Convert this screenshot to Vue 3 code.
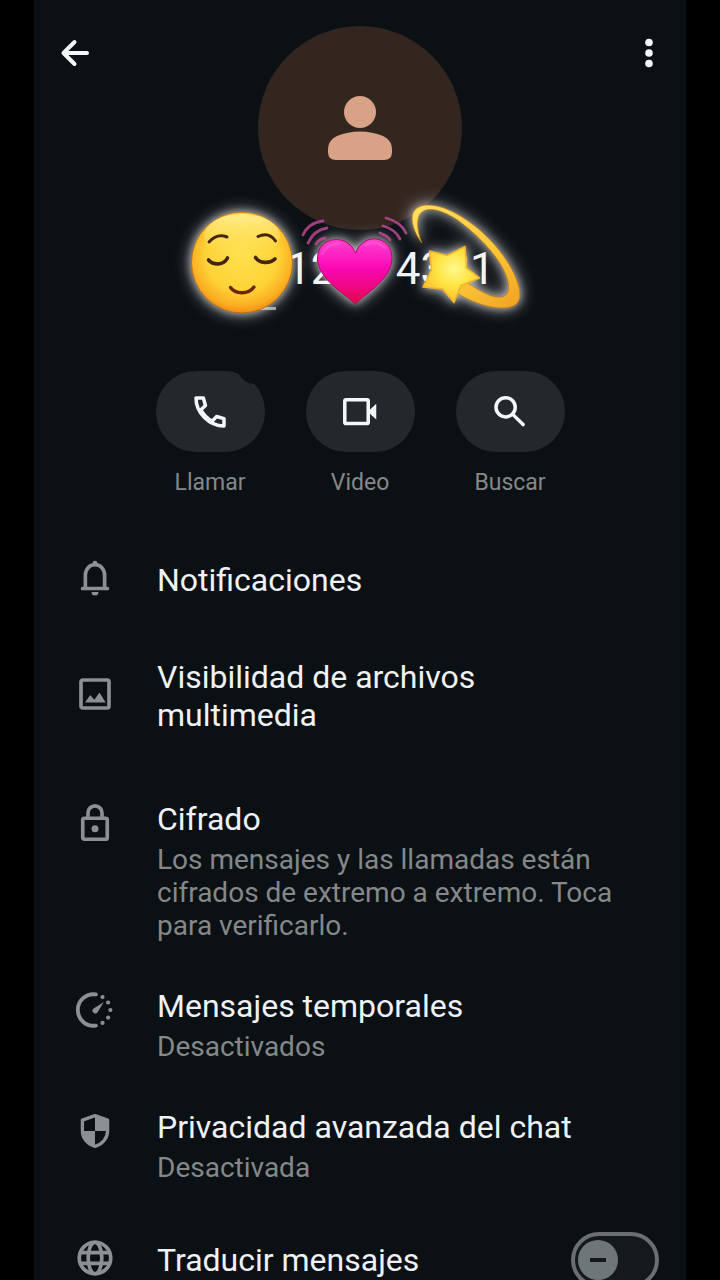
<script setup>
import { ref } from 'vue'

const translate = ref(false)

const actions = [
  { id: 'call', label: 'Llamar' },
  { id: 'video', label: 'Video' },
  { id: 'search', label: 'Buscar' }
]

const settings = [
  { id: 'bell', title: 'Notificaciones' },
  { id: 'media', title: 'Visibilidad de archivos multimedia' },
  {
    id: 'lock',
    title: 'Cifrado',
    detail: 'Los mensajes y las llamadas están cifrados de extremo a extremo. Toca para verificarlo.'
  },
  { id: 'timer', title: 'Mensajes temporales', detail: 'Desactivados' },
  { id: 'shield', title: 'Privacidad avanzada del chat', detail: 'Desactivada' }
]
</script>

<template>
  <div class="screen">
    <main class="panel">
      <header class="top">
        <button class="icon-button" type="button" aria-label="Atrás">
          <svg width="42" height="42" viewBox="0 0 42 42" fill="none" stroke="#f5f8fa" stroke-width="4" stroke-linecap="round" stroke-linejoin="round">
            <path d="M33 21H9.500M20.500 10L9.500 21l11 11" />
          </svg>
        </button>
        <div class="avatar">
          <svg width="64" height="64" viewBox="0 0 64 64" fill="#d9a186">
            <circle cx="32" cy="16" r="16" />
            <path d="M0 54C0 47 3 43 9 40c14-6 32-6 46 0 6 3 9 7 9 14v2q0 8-8 8H8q-8 0-8-8z" />
          </svg>
        </div>
        <button class="icon-button" type="button" aria-label="Más opciones">
          <svg width="42" height="42" viewBox="0 0 42 42" fill="#f5f8fa">
            <circle cx="25" cy="10.500" r="3.800" />
            <circle cx="25" cy="21" r="3.800" />
            <circle cx="25" cy="31.500" r="3.800" />
          </svg>
        </button>
        <svg class="stickers" width="360" height="140" viewBox="180 190 360 140" aria-hidden="true">
          <defs>
            <radialGradient id="face" cx="0.5" cy="0.42" r="0.6">
              <stop offset="0" stop-color="#ffe04e" />
              <stop offset="0.6" stop-color="#fed337" />
              <stop offset="0.85" stop-color="#fbae22" />
              <stop offset="1" stop-color="#ea8512" />
            </radialGradient>
            <linearGradient id="shine" x1="0" y1="0" x2="0" y2="1">
              <stop offset="0" stop-color="#fff3a0" stop-opacity="0.85" />
              <stop offset="1" stop-color="#ffe356" stop-opacity="0" />
            </linearGradient>
            <linearGradient id="heart" x1="0" y1="0" x2="0" y2="1">
              <stop offset="0" stop-color="#ff42d0" />
              <stop offset="0.45" stop-color="#fb08b5" />
              <stop offset="0.75" stop-color="#ee0782" />
              <stop offset="1" stop-color="#dd0944" />
            </linearGradient>
            <linearGradient id="orbit" x1="0" y1="0" x2="1" y2="1">
              <stop offset="0" stop-color="#ffe064" />
              <stop offset="0.6" stop-color="#fbc73a" />
              <stop offset="1" stop-color="#f0a122" />
            </linearGradient>
            <radialGradient id="star" cx="0.55" cy="0.4" r="0.65">
              <stop offset="0" stop-color="#fff98f" />
              <stop offset="0.45" stop-color="#ffe646" />
              <stop offset="1" stop-color="#fbb92b" />
            </radialGradient>
          </defs>
          <path d="M258 307h18v3h-18z" fill="#929494" />
          <g class="glow">
            <circle cx="242" cy="262.500" r="50.500" fill="url(#face)" stroke="#a95f15" stroke-width="0.700" />
            <ellipse cx="242" cy="236" rx="38" ry="22" fill="url(#shine)" />
            <g fill="none" stroke="#47240d" stroke-linecap="round">
              <path d="M209 242q8-9 18-5M258 236.500q11-5 17.500 4.500" stroke-width="3" />
              <path d="M208.500 260c5 5.500 15 5.500 19-2M255.500 257.500c4 6 14 6.500 19.500 1.500" stroke-width="3.600" />
              <path d="M230.500 287.500c5 7 18 7 23.500-.5" stroke="#6f220e" stroke-width="3.400" />
            </g>
          </g>
          <g class="glow">
            <path d="M355.500 304C346 295 317.500 279 317.500 258C317.500 237 347 232 355.500 253C364 231 392 236 392 258C392 279 365 294 355.500 304z" fill="url(#heart)" stroke="#ae0a62" stroke-width="1" />
            <path d="M322 254q5-11 17-10M366 245q10-6 19 3" fill="none" stroke="#ff82df" stroke-width="3" stroke-linecap="round" opacity="0.250" />
          </g>
          <g fill="none" stroke="#c5489a" stroke-width="2.800" stroke-linecap="round" opacity="0.800">
            <path d="M303 235q5-12 20-14M308 243q6-13 19-15M316 244q3-5 9-6M386 218q15 4 20 15M383 226q12 3 17 13M380 233q8 3 10 7" />
          </g>
          <g class="glow">
            <path d="M421.700 242.700C414 233 410 220 413 213C417 203 433 203 449 210C480 224 511 257 519 287C522 300 518 307 505 308C488 309 465 300 450 288L462 279C478 290 488 296 497 297C507 298 510 292 508 282C504 263 484 241 464 225C448 212 429 205 421 213C416 218 417 231 421.700 242.700z" fill="url(#orbit)" stroke="#bd761b" stroke-width="0.800" />
            <path d="M465 246.500L466.500 268L479.500 278L461 285.500L454 302.500L442.500 289L423 287L431.500 270L429.500 251L447 255.500z" fill="url(#star)" stroke="#f5b52b" stroke-width="1.600" stroke-linejoin="round" />
          </g>
        </svg>
      </header>

      <h1 class="number">+5 1233 4321</h1>

      <nav class="actions">
        <div v-for="action in actions" :key="action.id" class="action">
          <button :id="action.id" class="pill" type="button" :aria-labelledby="action.id + '-label'">
            <svg v-if="action.id === 'call'" width="42" height="42" viewBox="0 0 24 24" fill="none" stroke="#f5f8fa" stroke-width="2" stroke-linejoin="round">
              <path d="M4 4h4.200l1.200 4.300-2.600 2.400c1.500 2.900 3.600 5 6.500 6.500l2.500-2.600L20 15.800V20C11.500 20 4 12.500 4 4z" />
            </svg>
            <svg v-else-if="action.id === 'video'" width="42" height="42" viewBox="0 0 24 24">
              <rect x="3.300" y="5" width="13.400" height="13.600" rx="0.800" fill="none" stroke="#f5f8fa" stroke-width="2" />
              <path d="M16.700 11.500l4.600-4.200v9l-4.600-4.200z" fill="#f5f8fa" />
            </svg>
            <svg v-else width="42" height="42" viewBox="0 0 24 24" fill="none" stroke="#f5f8fa" stroke-width="2" stroke-linecap="round">
              <circle cx="9.500" cy="9.300" r="5.500" />
              <path d="M13.700 13.500l5.800 5.700" />
            </svg>
            <svg v-if="action.id === 'call'" class="notch" width="34" height="16" viewBox="0 0 34 16">
              <path d="M2 0q5 1 8 6 5 7 14 7 3 0 5 3h5V0z" fill="#0b1014" />
            </svg>
          </button>
          <label :id="action.id + '-label'" :for="action.id" class="action-label">{{ action.label }}</label>
        </div>
      </nav>

      <ul class="settings">
        <li v-for="item in settings" :key="item.id" class="row" :class="[item.id, { detailed: item.detail }]">
          <svg v-if="item.id === 'bell'" class="icon" viewBox="0 0 24 24">
            <path d="M6.500 18v-7.500C6.500 7 8.800 4.400 12 4.400s5.500 2.600 5.500 6.100V18M4.900 18h14.200" fill="none" stroke="currentColor" stroke-width="2.100" stroke-linecap="round" />
            <path d="M10.600 4.800V3.500a1.400 1.400 0 0 1 2.800 0v1.300zM10 20h4a2 2 0 0 1-4 0z" fill="currentColor" />
          </svg>
          <svg v-else-if="item.id === 'media'" class="icon" viewBox="0 0 24 24">
            <rect x="4" y="4" width="16" height="16" rx="1" fill="none" stroke="currentColor" stroke-width="2.100" />
            <path d="M6.300 16.900l3-4.300 2.300 2.700 3-4.200 3.500 5.800z" fill="currentColor" />
          </svg>
          <svg v-else-if="item.id === 'lock'" class="icon" viewBox="0 0 24 24">
            <rect x="5" y="9.300" width="14" height="12" rx="0.900" fill="none" stroke="currentColor" stroke-width="2.100" />
            <path d="M8 9V6.200a4 4 0 0 1 8 0V9" fill="none" stroke="currentColor" stroke-width="2.100" />
            <circle cx="12" cy="15.300" r="2" fill="currentColor" />
          </svg>
          <svg v-else-if="item.id === 'timer'" class="icon" viewBox="0 0 24 24">
            <path d="M12.500 3.100a9 9 0 1 0 0 17.800" fill="none" stroke="currentColor" stroke-width="2.200" stroke-linecap="round" />
            <path d="M11 11.300l6-3.900-3.600 6a1.500 1.500 0 1 1-2.400-2.100z" fill="currentColor" />
            <g fill="currentColor">
              <circle cx="16.300" cy="4.600" r="1.200" />
              <circle cx="19.500" cy="7.700" r="1.200" />
              <circle cx="20.800" cy="12" r="1.200" />
              <circle cx="19.500" cy="16.300" r="1.200" />
              <circle cx="16.300" cy="19.400" r="1.200" />
            </g>
          </svg>
          <svg v-else class="icon" viewBox="0 0 24 24">
            <path d="M12 3.200L19.200 5.800v6c0 4.300-2.900 7.700-7.200 9-4.300-1.300-7.200-4.700-7.200-9v-6z" fill="none" stroke="currentColor" stroke-width="1.900" stroke-linejoin="round" />
            <path d="M12 3l7.500 2.500v6.500H12zM4.500 12H12v9C8 19.700 5 16.500 4.500 12z" fill="currentColor" />
          </svg>
          <div class="text">
            <h2 class="title">{{ item.title }}</h2>
            <p v-if="item.detail" class="detail">{{ item.detail }}</p>
          </div>
        </li>
        <li class="row translate">
          <svg class="icon" viewBox="0 0 24 24" fill="none" stroke="currentColor" stroke-width="2.100">
            <circle cx="12" cy="12" r="9" />
            <ellipse cx="12" cy="12" rx="3.900" ry="9" />
            <path d="M3.700 8.900h16.600M3.700 15.100h16.600" />
          </svg>
          <label class="title text" for="translate">Traducir mensajes</label>
          <input id="translate" v-model="translate" class="switch" type="checkbox" role="switch" />
        </li>
      </ul>
    </main>
  </div>
</template>

<style>
body {
  background: #000;
}
</style>

<style scoped>
.screen {
  height: 100vh;
  overflow: hidden;
  padding: 0 34px;
  background: #000;
  font-family: Roboto, "Liberation Sans", sans-serif;
}

.panel {
  min-height: 100%;
  background: #0b1014;
}

.top {
  position: relative;
  display: flex;
  justify-content: space-between;
  align-items: flex-start;
  padding: 26px 20px 0;
}

.icon-button {
  display: flex;
  width: 42px;
  margin-top: 6px;
  padding: 0;
  border: 0;
  background: none;
}

.avatar {
  display: flex;
  align-items: center;
  justify-content: center;
  width: 204px;
  height: 204px;
  border-radius: 50%;
  background: #33261f;
}

.stickers {
  position: absolute;
  top: 190px;
  left: calc(50% - 180px);
  z-index: 1;
  overflow: visible;
}

.glow {
  filter: drop-shadow(0 0 4px rgba(255, 255, 255, 0.6)) drop-shadow(0 0 8px rgba(255, 255, 255, 0.5));
}

.number {
  margin: 14px 0 0;
  color: #f1f4f6;
  font-size: 44px;
  font-weight: 400;
  line-height: 50px;
  text-align: center;
}

.actions {
  display: flex;
  justify-content: center;
  gap: 41px;
  margin-top: 77px;
}

.action {
  display: flex;
  flex-direction: column;
  align-items: center;
  gap: 18px;
}

.pill {
  position: relative;
  display: flex;
  align-items: center;
  justify-content: center;
  width: 109px;
  height: 81px;
  padding: 0;
  border: 0;
  border-radius: 40px;
  background: #24282b;
}

.notch {
  position: absolute;
  top: 0;
  right: 0;
}

.action-label {
  color: #84888a;
  font-size: 23px;
  line-height: 26px;
}

.settings {
  margin: 0;
  padding: 42px 27px 0 40px;
  list-style: none;
}

.row {
  display: flex;
  align-items: center;
  gap: 41px;
  padding: 23px 0;
}

.bell {
  padding-bottom: 36px;
}

.media {
  padding-bottom: 43px;
}

.detailed {
  align-items: flex-start;
  padding-bottom: 22px;
}

.translate {
  padding-top: 26px;
}

.icon {
  flex: none;
  width: 42px;
  height: 42px;
  margin: -4px 0 0;
  color: #8b9093;
}

.detailed .icon {
  margin: 2px 0 0;
}

.text {
  flex: 1;
  min-width: 0;
}

.title {
  margin: 0;
  color: #eff2f4;
  font-size: 32px;
  font-weight: 400;
  line-height: 38px;
}

.media .text {
  max-width: 400px;
}

.detail {
  margin: 5px 0 0;
  color: #84888a;
  font-size: 28px;
  line-height: 33px;
}

.switch {
  position: relative;
  flex: none;
  appearance: none;
  box-sizing: border-box;
  width: 88px;
  height: 56px;
  margin: 0;
  border: 4px solid #6c6f71;
  border-radius: 28px;
  background: #14191c;
}

.switch::before {
  content: "";
  position: absolute;
  top: 4px;
  left: 3px;
  width: 40px;
  height: 40px;
  border-radius: 50%;
  background: linear-gradient(#14191c, #14191c) center / 16px 4px no-repeat #6d7678;
}

.switch:checked::before {
  left: 37px;
}
</style>
